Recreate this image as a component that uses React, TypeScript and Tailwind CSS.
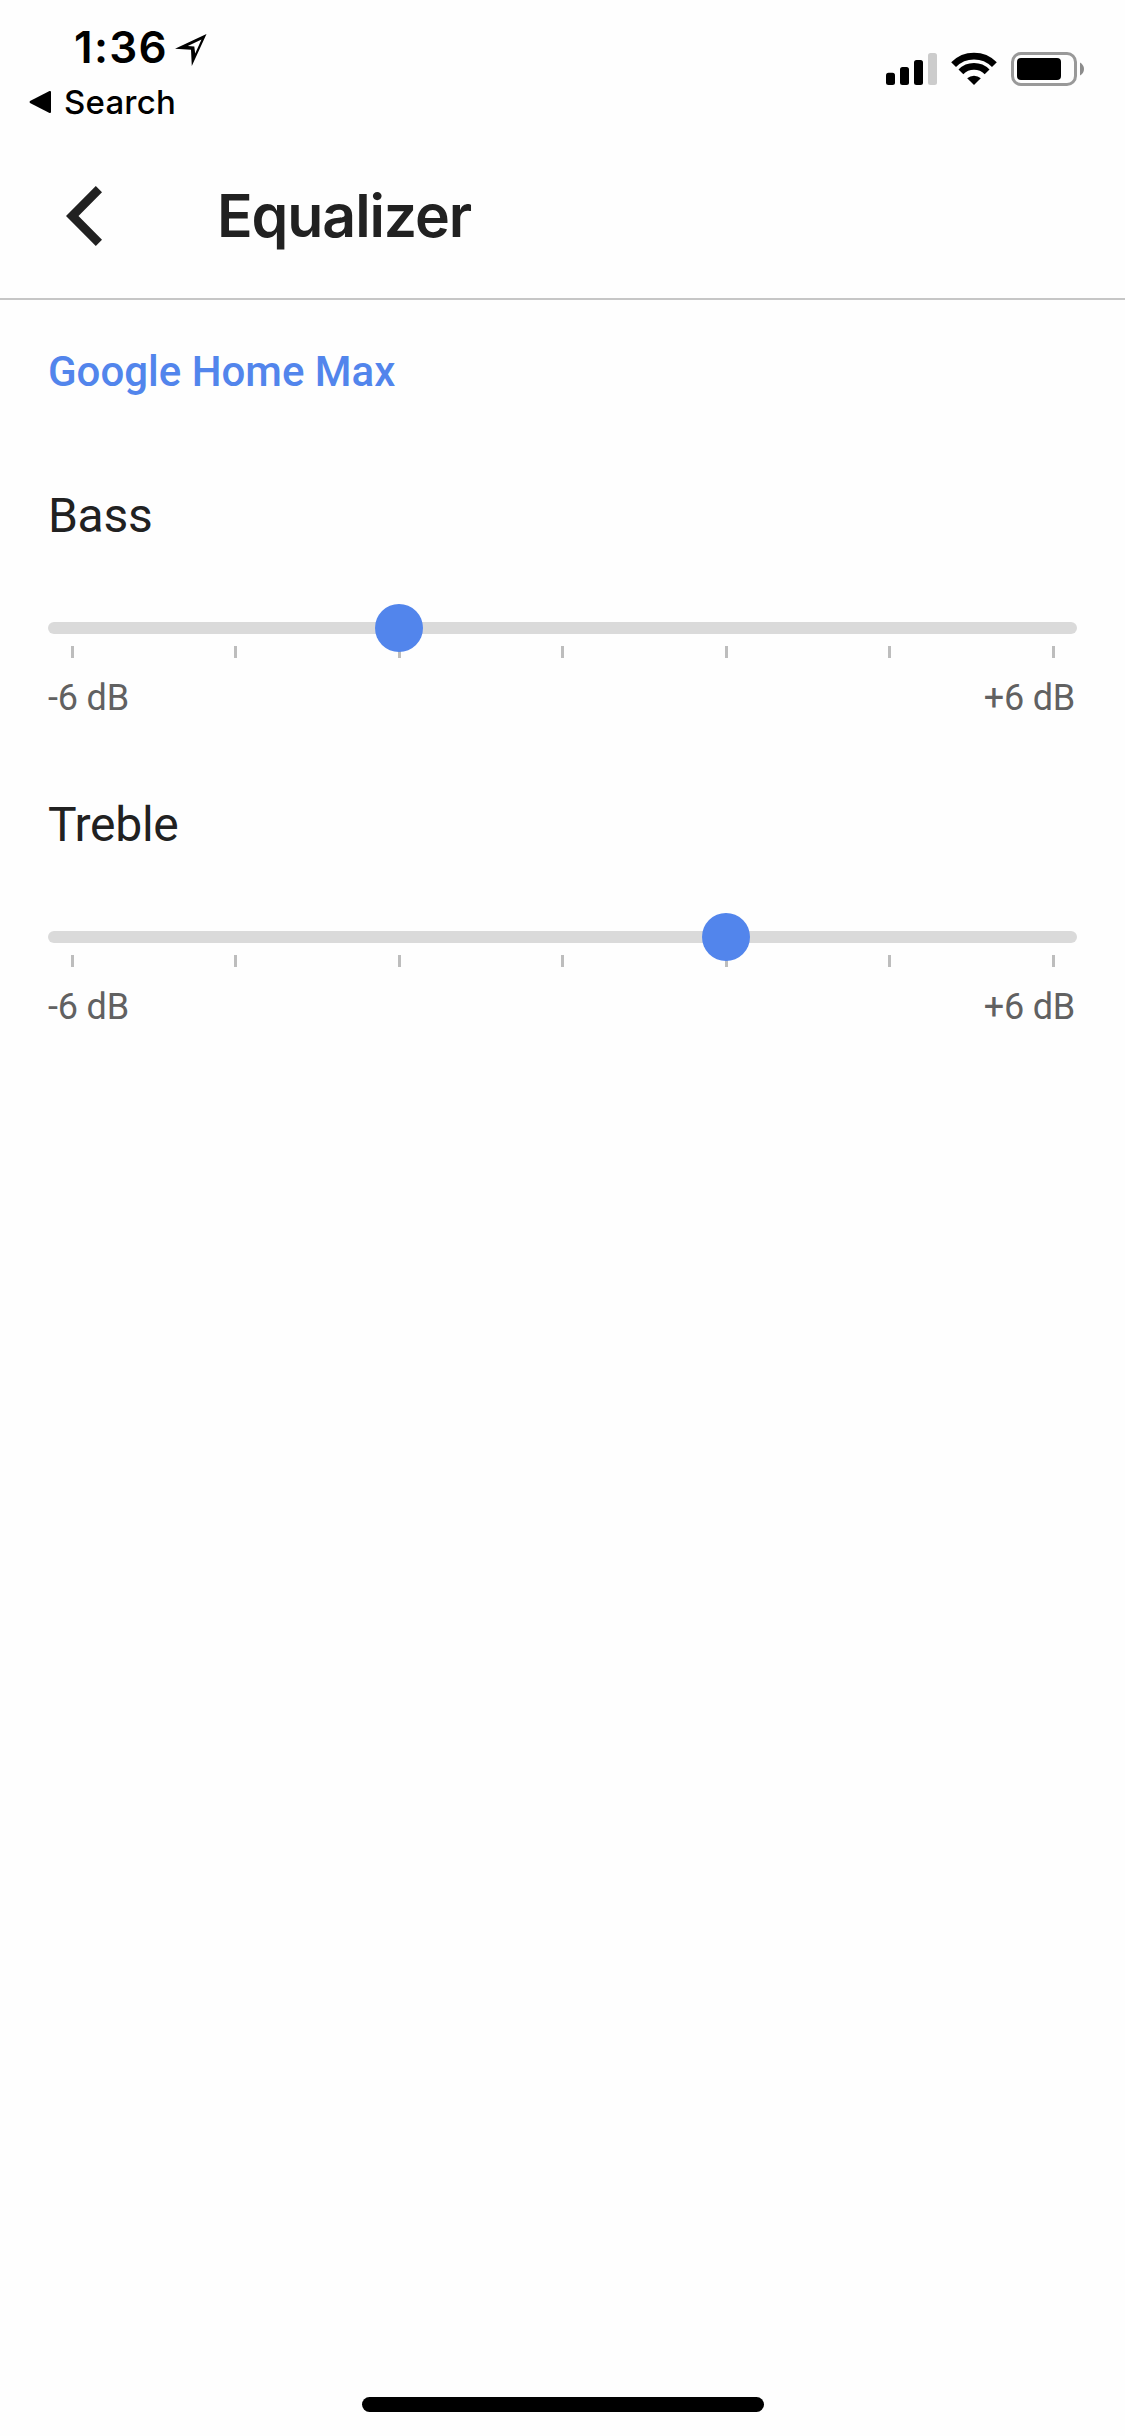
interface Band {
  name: string;
  value: number;
}

const MIN_DB = -6;
const MAX_DB = 6;
const TICKS = [-6, -4, -2, 0, 2, 4, 6];

const BANDS: Band[] = [
  { name: "Bass", value: -2 },
  { name: "Treble", value: 2 },
];

function percent(value: number): number {
  return ((value - MIN_DB) / (MAX_DB - MIN_DB)) * 100;
}

function LocationArrow() {
  return (
    <svg viewBox="0 0 32 32" className="mt-[11px] ml-[7px] h-8 w-8" fill="#000">
      <path fillRule="evenodd" d="M31.5 0 L0 14.8 L16 15.8 L16.8 32 Z M26.5 5.5 L20.2 19.5 L19.3 12.6 L12.8 12 Z" />
    </svg>
  );
}

function StatusIcons() {
  return (
    <svg viewBox="886 52 199 34" className="mt-[52px] h-[34px] w-[199px]">
      <rect x="886" y="72.7" width="9" height="12.3" rx="2.5" />
      <rect x="900" y="67" width="9" height="18" rx="2.5" />
      <rect x="914" y="60" width="9" height="25" rx="2.5" />
      <rect x="928" y="53" width="9" height="32" rx="2.5" fill="#ccc" />
      <g fill="none" stroke="#000" strokeWidth="6.8">
        <path d="M953.6 64.6 A28.8 28.8 0 0 1 994.4 64.6" />
        <path d="M960.9 71.9 A18.5 18.5 0 0 1 987.1 71.9" />
      </g>
      <path d="M974 85 L967.2 78.2 A10.3 10.3 0 0 1 980.8 78.2 Z" />
      <rect x="1012.5" y="53.5" width="63" height="31" rx="8.5" fill="none" stroke="#999" strokeWidth="3" />
      <rect x="1017" y="58" width="44" height="22" rx="4" />
      <path d="M1080 62.5 Q1084 65 1084 69 Q1084 73 1080 75.5 Z" fill="#8c8c8c" />
    </svg>
  );
}

function StatusBar() {
  return (
    <div className="flex h-[132px] justify-between pr-10 font-['Inter',sans-serif] text-black">
      <div className="pt-[23px]">
        <div className="flex h-12 pl-[74px]">
          <span className="text-[44px] leading-[48px] font-semibold tracking-[1.3px]">1:36</span>
          <LocationArrow />
        </div>
        <div className="mt-[11px] flex h-10 items-center pl-[29px]">
          <svg viewBox="0 0 22 24" className="h-6 w-[22px]">
            <path d="M1 11 L20.5 1 Q22 .6 22 2 V22 Q22 23.4 20.5 23 L1 13 Q0 12 1 11 Z" />
          </svg>
          <span className="ml-[13px] text-[33px] leading-10 font-medium tracking-[0.2px]">Search</span>
        </div>
      </div>
      <StatusIcons />
    </div>
  );
}

function Header() {
  return (
    <header className="flex h-[168px] items-center border-b-2 border-[#c6c6c6] pt-0.5 pl-[66px] text-[#212121]">
      <button type="button" aria-label="Back">
        <svg viewBox="0 0 36 60" className="h-[60px] w-9" fill="currentColor">
          <path d="M29.8 0 L36 6.3 L12.5 30 L36 53.7 L29.8 60 L0 30 Z" />
        </svg>
      </button>
      <h1 className="ml-[115px] font-['Inter',sans-serif] text-[59px] leading-[72px] font-[560] tracking-[-1.1px]">
        Equalizer
      </h1>
    </header>
  );
}

function BandSlider({ band }: { band: Band }) {
  return (
    <section className="h-[309px]">
      <h2 className="text-[48px] leading-14 tracking-[-0.3px] text-[#212121]">{band.name}</h2>
      <div className="relative mt-[60px] h-12 pt-[18px]">
        <div className="h-3 rounded-full bg-[#dadada]" />
        <div className="mt-3 flex justify-between px-[22.5px]">
          {TICKS.map((tick) => (
            <span key={tick} className="h-3 w-[3px] bg-[#bdbdbd]" />
          ))}
        </div>
        <div className="absolute inset-x-6 top-0 h-12">
          <div
            className="relative h-12 w-12 -translate-x-1/2 rounded-full bg-[#5285ec]"
            style={{ left: `${percent(band.value)}%` }}
          />
        </div>
      </div>
      <div className="mt-6 flex justify-between pr-0.5 text-[36px] leading-[44px] tracking-[-0.2px] text-[#616161]">
        <span>{MIN_DB} dB</span>
        <span>+{MAX_DB} dB</span>
      </div>
    </section>
  );
}

export default function App() {
  return (
    <div className="flex h-[2436px] w-[1125px] flex-col bg-[#fefefe] font-['Roboto',sans-serif]">
      <StatusBar />
      <Header />
      <main className="flex-1 px-12 pt-[47px]">
        <p className="text-[42px] leading-[50px] font-medium text-[#5285ec]">Google Home Max</p>
        <div className="mt-[91px]">
          {BANDS.map((band) => (
            <BandSlider key={band.name} band={band} />
          ))}
        </div>
      </main>
      <div className="mb-6 ml-[362px] h-[15px] w-[402px] rounded-full bg-black" />
    </div>
  );
}
